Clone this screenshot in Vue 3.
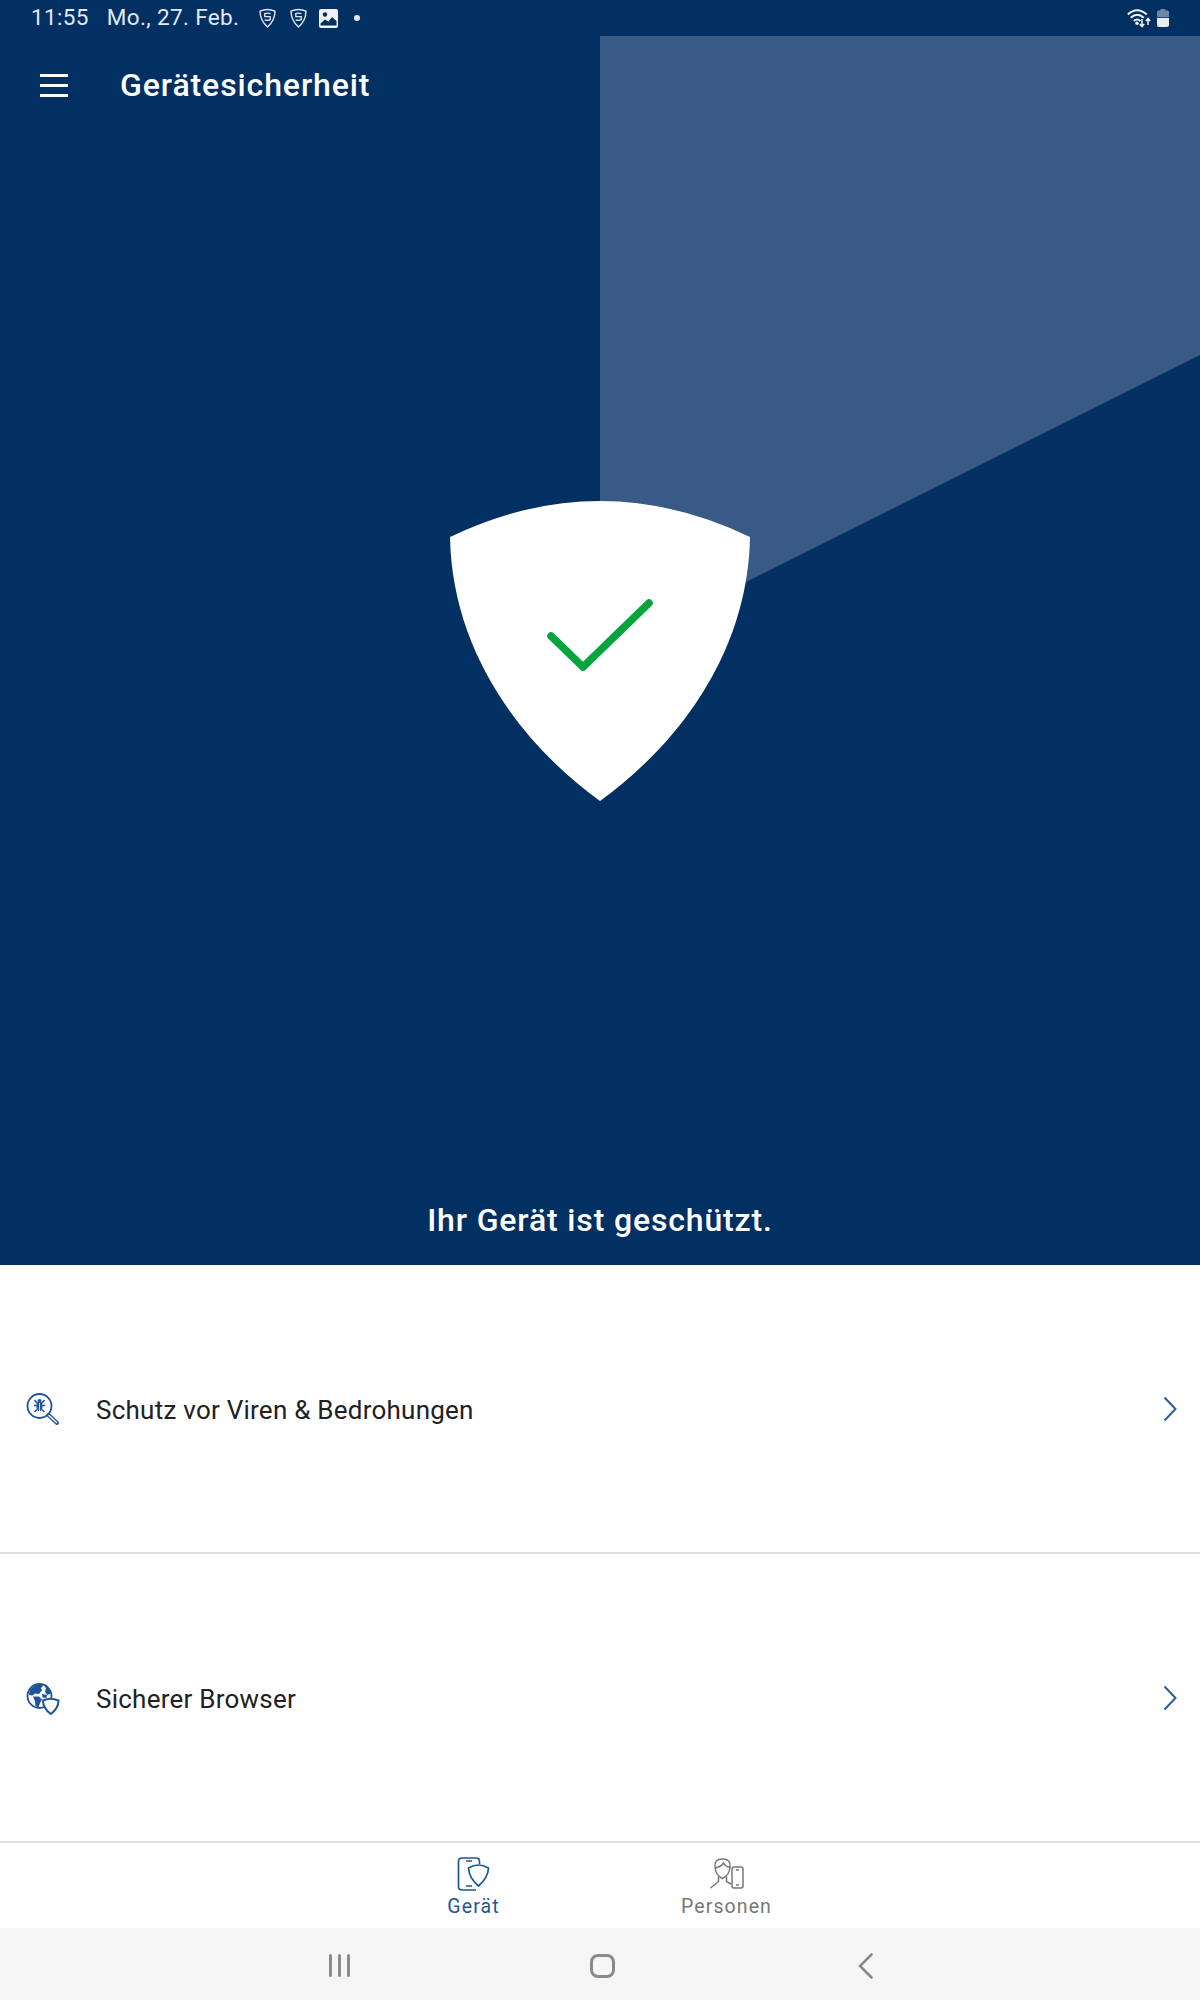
<template>
  <div class="screen">
    <section class="hero">
      <svg class="beam" width="1200" height="1265" viewBox="0 0 1200 1265" aria-hidden="true">
        <polygon points="600,36 1200,36 1200,355 600,655" fill="#395a84" />
      </svg>
      <div class="status">
        <div class="status-left">
          <span class="time">11:55</span>
          <span class="date">Mo., 27. Feb.</span>
          <svg class="st-shield first" width="17" height="20" viewBox="0 0 17 20">
            <path d="M1 3.2Q8.5 -.2 16 3.2Q15.8 12.5 8.5 19Q1.2 12.5 1 3.2Z" fill="none" stroke="#dfe6ef" stroke-width="1.4" />
            <path d="M11.5 5.6Q8.5 4.6 5.8 5.6V8.6H11.2V11.6Q8.5 13 5.6 11.8" fill="none" stroke="#dfe6ef" stroke-width="1.4" />
          </svg>
          <svg class="st-shield second" width="17" height="20" viewBox="0 0 17 20">
            <path d="M1 3.2Q8.5 -.2 16 3.2Q15.8 12.5 8.5 19Q1.2 12.5 1 3.2Z" fill="none" stroke="#dfe6ef" stroke-width="1.4" />
            <path d="M11.5 5.6Q8.5 4.6 5.8 5.6V8.6H11.2V11.6Q8.5 13 5.6 11.8" fill="none" stroke="#dfe6ef" stroke-width="1.4" />
          </svg>
          <svg class="st-image" width="19" height="19" viewBox="0 0 19 19">
            <rect width="19" height="19" rx="2" fill="#eef2f6" />
            <circle cx="6" cy="5.5" r="2.2" fill="#03305f" />
            <path d="M1.5 14.5L6 10.5L9.5 12.5L13 8L17.5 12V16.5H1.5Z" fill="#03305f" />
          </svg>
          <span class="dot"></span>
        </div>
        <div class="status-right">
          <svg width="30" height="20" viewBox="0 0 30 20">
            <path d="M.8 6.5Q10 -2 19.8 6.5M3.8 9.8Q10 3.6 16.8 9.8M6.8 13Q10 10 13.6 13" fill="none" stroke="#f1f4f7" stroke-width="2" />
            <circle cx="10" cy="15.2" r="1.7" fill="#f1f4f7" />
            <path d="M15 11V18.5M12.8 16L15 18.6L17.2 16" fill="none" stroke="#f1f4f7" stroke-width="1.5" />
            <path d="M21 17V10.5M18.9 13L21 10.4L23.1 13" fill="none" stroke="#f1f4f7" stroke-width="1.5" />
          </svg>
          <svg width="12" height="18" viewBox="0 0 12 18">
            <path d="M3.5 0H8.5V1.5H10.5Q12 1.5 12 3V8.3H0V3Q0 1.5 1.5 1.5H3.5Z" fill="#6f87a6" />
            <path d="M0 9H12V16Q12 18 10 18H2Q0 18 0 16Z" fill="#e9edf2" />
          </svg>
        </div>
      </div>
      <header class="toolbar">
        <div class="menu"><i></i><i></i><i></i></div>
        <h1>Gerätesicherheit</h1>
      </header>
      <svg class="shield" width="300" height="300" viewBox="0 0 300 300" aria-label="Geschützt">
        <path d="M0 36Q150 -36 300 36C298 150 230 242 150 300C70 242 2 150 0 36Z" fill="#fff" />
        <path d="M101 135L133 166L199 102" fill="none" stroke="#05a43c" stroke-width="7.5" stroke-linecap="round" stroke-linejoin="round" />
      </svg>
      <p class="message">Ihr Gerät ist geschützt.</p>
    </section>

    <main class="list">
      <div class="row">
        <svg class="row-icon" width="34" height="34" viewBox="0 0 34 34">
          <circle cx="13.5" cy="14" r="12" fill="none" stroke="#1f5597" stroke-width="1.8" />
          <path d="M22.5 23L31 31" stroke="#1f5597" stroke-width="4" stroke-linecap="round" />
          <path d="M23 23.5L30.5 30.5" stroke="#fff" stroke-width="1.4" stroke-linecap="round" />
          <ellipse cx="13.5" cy="14.5" rx="3" ry="5" fill="#1f5597" />
          <circle cx="13.5" cy="9" r="2" fill="#1f5597" />
          <path d="M8.5 8L11 11H16L18.5 8M8 13.5H19M8.5 20L11 17.5M18.5 20L16 17.5" stroke="#1f5597" stroke-width="1.6" fill="none" />
          <path d="M13.5 11V20" stroke="#fff" stroke-width="0.8" />
        </svg>
        <span class="row-label">Schutz vor Viren &amp; Bedrohungen</span>
        <svg class="chevron" width="14" height="26" viewBox="0 0 14 26">
          <path d="M1.5 1.5L12.5 13L1.5 24.5" fill="none" stroke="#2a5c9c" stroke-width="2" />
        </svg>
      </div>
      <div class="row">
        <svg class="row-icon" width="34" height="34" viewBox="0 0 34 34">
          <circle cx="13.5" cy="15" r="12" fill="#fff" stroke="#1f5597" stroke-width="1.8" />
          <path d="M4 9Q8 3.5 15 2.5L17 5L15 7L16 9.5L13 13L9 12.5L6.5 14.5L3 14Q3 11 4 9ZM7 15.5L13 15.5L16 18.5L14 22L12.5 26.5L9.5 25L9 20.5ZM18 4L23 8L25 12.5L21 14L19 10.5L20 7.5ZM16 13L21 14L20.5 17L16.5 16.5Z" fill="#1f5597" />
          <path d="M17 19.5Q24.5 16 32.5 19.5Q32.5 27.5 24.8 33Q17 27.5 17 19.5Z" fill="#fff" stroke="#1f5597" stroke-width="2" />
        </svg>
        <span class="row-label">Sicherer Browser</span>
        <svg class="chevron" width="14" height="26" viewBox="0 0 14 26">
          <path d="M1.5 1.5L12.5 13L1.5 24.5" fill="none" stroke="#2a5c9c" stroke-width="2" />
        </svg>
      </div>
    </main>

    <nav class="tabs">
      <div class="tab active">
        <svg width="34" height="34" viewBox="0 0 34 34">
          <path d="M19 33H5Q1.5 33 1.5 29.5V4.5Q1.5 1 5 1H19Q22.5 1 22.5 4.5V7" fill="none" stroke="#1f5597" stroke-width="1.7" />
          <path d="M9 4H15M9 29H15" stroke="#1f5597" stroke-width="1.5" />
          <path d="M11.5 11Q21.5 5 31.5 11Q31 21 21.5 29Q12 21 11.5 11Z" fill="#fff" stroke="#1f5597" stroke-width="1.7" />
        </svg>
        <span>Gerät</span>
      </div>
      <div class="tab">
        <svg width="34" height="34" viewBox="0 0 34 34">
          <path d="M5 10Q4 2 12.5 2Q21 2 20 10Q19.5 18 12.5 21.5Q5.5 18 5 10Z" fill="none" stroke="#777" stroke-width="1.5" />
          <path d="M5 11Q11 10 13.5 6Q15.5 10 20 10M8.5 19.5V24.5L0.5 31M16.5 19.5V24.5L21 27" fill="none" stroke="#777" stroke-width="1.5" />
          <rect x="22" y="10" width="11" height="21" rx="2" fill="#fff" stroke="#777" stroke-width="1.5" />
          <path d="M26 13H29M26 28H29" stroke="#777" stroke-width="1.3" />
        </svg>
        <span>Personen</span>
      </div>
    </nav>

    <footer class="nav">
      <div class="recents"><i></i><i></i><i></i></div>
      <div class="home"></div>
      <svg class="back" width="16" height="26" viewBox="0 0 16 26">
        <path d="M13.5 1.5L2 13L13.5 24.5" fill="none" stroke="#8a8a8a" stroke-width="2.6" stroke-linecap="round" />
      </svg>
    </footer>
  </div>
</template>

<script setup>
</script>

<style scoped>
.screen {
  width: 1200px;
  height: 2000px;
  display: flex;
  flex-direction: column;
  overflow: hidden;
  background: #fff;
  font-family: Roboto, "Liberation Sans", sans-serif;
}
.hero {
  position: relative;
  height: 1265px;
  flex: none;
  display: flex;
  flex-direction: column;
  align-items: stretch;
  background: #023063;
  color: #fff;
}
.beam {
  position: absolute;
  left: 0;
  top: 0;
}
.status {
  position: relative;
  height: 36px;
  display: flex;
  justify-content: space-between;
  align-items: center;
  padding: 0 31px 0 31px;
  color: #e4eaf1;
  font-size: 22.5px;
  letter-spacing: 0.35px;
}
.status-left,
.status-right {
  display: flex;
  align-items: center;
}
.time,
.date {
  margin-top: -2px;
}
.date {
  margin-left: 18px;
}
.first {
  margin-left: 20px;
}
.second {
  margin-left: 14px;
}
.st-image {
  margin-left: 12px;
}
.dot {
  width: 6px;
  height: 6px;
  margin-left: 16px;
  border-radius: 50%;
  background: #e4eaf1;
}
.toolbar {
  position: relative;
  height: 98px;
  display: flex;
  align-items: center;
  padding-left: 40px;
}
.menu {
  width: 28px;
  display: flex;
  flex-direction: column;
  gap: 7px;
  margin-right: 52px;
}
.menu i {
  display: block;
  height: 3px;
  background: #fff;
}
h1 {
  margin: 0;
  font-size: 32px;
  font-weight: 500;
  letter-spacing: 0.9px;
}
.shield {
  position: relative;
  align-self: center;
  margin-top: 367px;
}
.message {
  position: relative;
  margin: auto 0 25px;
  text-align: center;
  font-size: 32px;
  font-weight: 500;
  letter-spacing: 0.85px;
  line-height: 40px;
}
.list {
  flex: 1;
  display: flex;
  flex-direction: column;
}
.row {
  flex: 1;
  display: flex;
  align-items: center;
  padding: 0 23px 0 26px;
  border-bottom: 2px solid #dcdfe1;
}
.row-icon {
  flex: none;
}
.row-label {
  flex: 1;
  margin-left: 36px;
  padding-top: 2px;
  font-size: 26px;
  letter-spacing: 0.24px;
  color: #212121;
}
.tabs {
  height: 85px;
  flex: none;
  display: flex;
  justify-content: center;
  gap: 127px;
}
.tab {
  width: 126px;
  display: flex;
  flex-direction: column;
  align-items: center;
  padding-top: 14px;
  gap: 4px;
  font-size: 19.5px;
  line-height: 24px;
  letter-spacing: 1.1px;
  color: #777;
}
.tab.active {
  color: #1f5597;
}
.nav {
  position: relative;
  box-sizing: border-box;
  height: 72px;
  flex: none;
  display: flex;
  align-items: center;
  justify-content: space-between;
  padding: 3px 326px 0 329px;
  background: #f5f5f5;
}
.recents {
  display: flex;
  gap: 6px;
}
.recents i {
  display: block;
  width: 3px;
  height: 23px;
  border-radius: 2px;
  background: #8a8a8a;
}
.home {
  width: 25px;
  height: 24px;
  margin-right: 3px;
  box-sizing: border-box;
  border: 3px solid #8a8a8a;
  border-radius: 8px;
}
.back {
  flex: none;
}
</style>
